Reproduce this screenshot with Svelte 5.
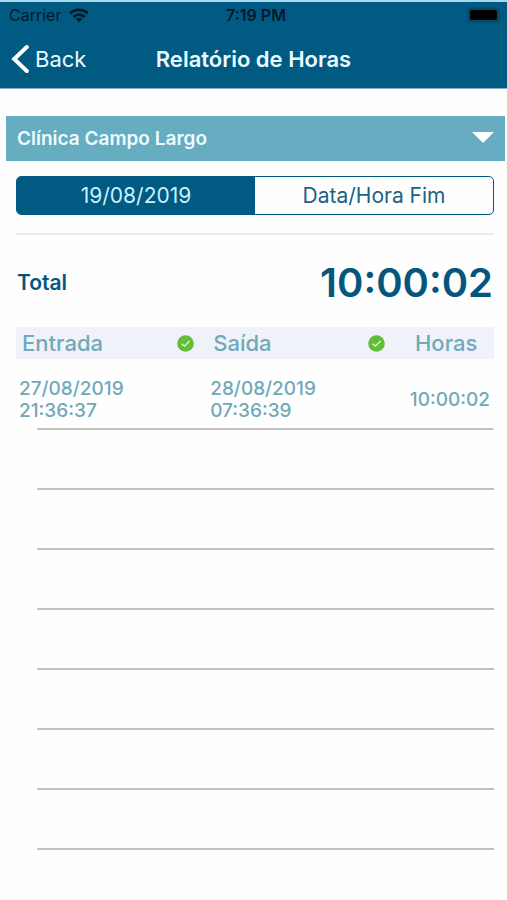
<script>
    let clinics = ["Clínica Campo Largo"];
    let clinic = clinics[0];

    let start = "19/08/2019";
    let end = "";
    let active = "start";

    let entries = [
        {
            inDate: "27/08/2019",
            inTime: "21:36:37",
            outDate: "28/08/2019",
            outTime: "07:36:39",
            hours: "10:00:02",
        },
    ];
    let total = "10:00:02";

    // Empty rows keep the list lined down to the bottom of the screen
    const emptyRows = Array(7);
</script>

<header>
    <div class="status">
        <span class="carrier">
            Carrier
            <svg width="20" height="15" viewBox="0 0 20 15" aria-hidden="true">
                <g fill="none" stroke="currentColor" stroke-width="2.8">
                    <path d="M1.2 5.6a12.4 12.4 0 0 1 17.6 0" />
                    <path d="M4.4 9a7.9 7.9 0 0 1 11.2 0" />
                </g>
                <path fill="currentColor" d="M10 14.2 6.8 11a4.6 4.6 0 0 1 6.4 0z" />
            </svg>
        </span>
        <span class="clock">7:19 PM</span>
        <svg class="battery" width="36" height="16" viewBox="0 0 36 16" aria-hidden="true">
            <rect x="0.5" y="0.5" width="32" height="15" rx="4" fill="#064766" />
            <rect x="3" y="3" width="27" height="10" rx="2" fill="#000" />
            <path d="M34 5.5a3 3 0 0 1 0 5z" fill="#064766" />
        </svg>
    </div>
    <nav>
        <button class="back">
            <svg width="18" height="30" viewBox="0 0 18 30" aria-hidden="true">
                <path
                    d="M15.8 3 3.2 15l12.6 12"
                    fill="none"
                    stroke="#fff"
                    stroke-width="4"
                    stroke-linecap="round"
                />
            </svg>
            Back
        </button>
        <h1>Relatório de Horas</h1>
    </nav>
</header>

<main>
    <div class="picker">
        <select aria-label="Clínica" bind:value={clinic}>
            {#each clinics as name}
                <option>{name}</option>
            {/each}
        </select>
        <svg width="22" height="11" viewBox="0 0 22 11" aria-hidden="true">
            <path d="M0 0h22L11 11z" fill="#fff" />
        </svg>
    </div>

    <div class="content">
        <div class="segments">
            <button class:active={active === "start"} on:click={() => (active = "start")}>
                {start || "Data/Hora Início"}
            </button>
            <button class:active={active === "end"} on:click={() => (active = "end")}>
                {end || "Data/Hora Fim"}
            </button>
        </div>

        <div class="total">
            <span>Total</span>
            <strong>{total}</strong>
        </div>

        <table>
            <thead>
                <tr>
                    {#each ["Entrada", "Saída"] as label}
                        <th>
                            <div class="head">
                                {label}
                                <svg width="17" height="17" viewBox="0 0 17 17" aria-hidden="true">
                                    <circle cx="8.5" cy="8.5" r="8.3" fill="#62bd38" />
                                    <path
                                        d="M4.6 8.7 7.4 11.2 12.6 6"
                                        fill="none"
                                        stroke="#e4f7d8"
                                        stroke-width="1.3"
                                    />
                                </svg>
                            </div>
                        </th>
                    {/each}
                    <th class="hours">Horas</th>
                </tr>
            </thead>
            <tbody>
                {#each entries as entry}
                    <tr class="entry">
                        <td>{entry.inDate}<br />{entry.inTime}</td>
                        <td>{entry.outDate}<br />{entry.outTime}</td>
                        <td class="hours">{entry.hours}</td>
                    </tr>
                {/each}
                {#each emptyRows as _}
                    <tr><td colspan="3"></td></tr>
                {/each}
            </tbody>
        </table>
    </div>
</main>

<style>
    :global(body) {
        background: #fefefe;
        font-family: Inter, "Liberation Sans", sans-serif;
    }

    header {
        background: #005a82;
        border-top: 2px solid #a5d8ec;
        border-bottom: 1px solid #7fb4ca;
        color: #eafaff;
    }

    .status {
        display: grid;
        grid-template-columns: 1fr auto 1fr;
        align-items: center;
        height: 26px;
        padding: 0 4px 0 9px;
        color: #04192b;
        font-size: 16px;
    }

    .carrier {
        display: flex;
        align-items: center;
        gap: 8px;
    }

    .clock {
        font-weight: 600;
    }

    .battery {
        justify-self: end;
    }

    nav {
        display: grid;
        grid-template-columns: 1fr auto 1fr;
        align-items: center;
        height: 58px;
        padding: 2px 11px 0;
    }

    button {
        border: none;
        background: none;
        font: inherit;
        color: inherit;
        cursor: pointer;
    }

    .back {
        justify-self: start;
        display: flex;
        align-items: center;
        gap: 6px;
        padding: 0;
        font-size: 22px;
    }

    h1 {
        margin: 0;
        font-size: 22px;
        font-weight: 600;
    }

    .picker {
        position: relative;
        margin: 27px 2px 0 6px;
    }

    .picker select {
        display: block;
        width: 100%;
        height: 45px;
        padding: 0 40px 0 11px;
        border: none;
        border-radius: 0;
        appearance: none;
        background: #66adc1;
        color: #eefbff;
        font-family: inherit;
        font-size: 19px;
        font-weight: 600;
    }

    .picker svg {
        position: absolute;
        top: 16px;
        right: 11px;
        pointer-events: none;
    }

    .content {
        padding: 15px 13px 0 16px;
    }

    .segments {
        display: flex;
        height: 39px;
        box-sizing: border-box;
        border: 1px solid #005a82;
        border-radius: 5px;
        overflow: hidden;
    }

    .segments button {
        flex: 1;
        padding: 0;
        color: #1c6285;
        font-size: 21px;
    }

    .segments button.active {
        background: #005a82;
        color: #c9f1ff;
    }

    .total {
        display: flex;
        align-items: center;
        justify-content: space-between;
        height: 89px;
        margin-top: 18px;
        padding: 3px 1px 0;
        border-top: 2px solid #ececec;
        color: #04567c;
        font-size: 21px;
        font-weight: 600;
    }

    .total strong {
        font-size: 40px;
        font-weight: 600;
    }

    table {
        width: 100%;
        table-layout: fixed;
        border-collapse: collapse;
        color: #70a9ba;
    }

    th {
        box-sizing: border-box;
        width: 40%;
        height: 32px;
        padding: 0 13px 0 6px;
        background: #eff3f9;
        font-size: 22px;
        font-weight: 500;
        line-height: 30px;
        text-align: left;
    }

    th.hours {
        width: 20%;
        padding: 0;
        text-align: center;
    }

    .head {
        display: flex;
        align-items: center;
        justify-content: space-between;
    }

    tbody tr {
        background: linear-gradient(#c2c2c2, #c2c2c2) right bottom / calc(100% - 21px) 2px no-repeat;
    }

    td {
        padding: 0;
        height: 60px;
    }

    .entry td {
        height: 55px;
        padding: 13px 0 3px 3px;
        font-size: 19px;
        font-weight: 500;
        line-height: 22px;
    }

    .entry td.hours {
        padding-right: 4px;
        text-align: right;
    }
</style>
